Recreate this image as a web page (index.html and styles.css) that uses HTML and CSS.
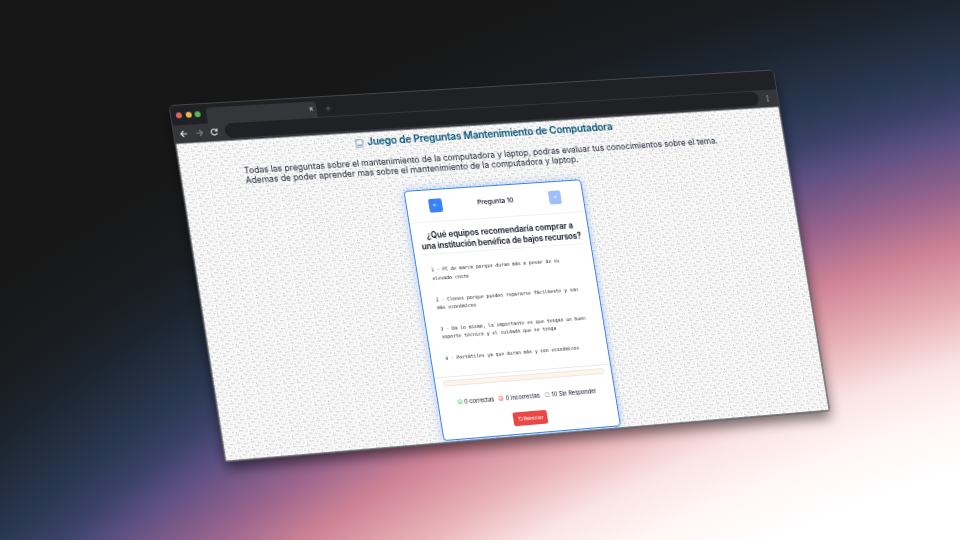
FILE: index.html
```html
<!DOCTYPE html>
<html lang="es">
<head>
<meta charset="utf-8">
<title>Juego de Preguntas</title>
<link rel="stylesheet" href="styles.css">
</head>
<body>
<div class="window">
  <div class="tabbar">
    <div class="lights"><i class="red"></i><i class="yellow"></i><i class="green"></i></div>
    <div class="tab"><svg viewBox="0 0 6 6" width="4.8" height="4.8"><path d="M1 1 5 5M5 1 1 5"/></svg></div>
    <svg class="plus" viewBox="0 0 6 6" width="6" height="6"><path d="M3 .4V5.6M.4 3H5.6"/></svg>
  </div>
  <div class="toolbar">
    <svg class="nav" viewBox="0 0 8 8" width="8" height="8"><path d="M7.4 4H1M4 1 1 4l3 3"/></svg>
    <svg class="nav dim" viewBox="0 0 8 8" width="8" height="8"><path d="M.6 4H7M4 1l3 3-3 3"/></svg>
    <svg class="nav" viewBox="0 0 8 8" width="8" height="8"><path d="M6.4 2.2A3 3 0 1 0 6.8 5M7 .6V3H4.6"/></svg>
    <div class="address"></div>
    <svg class="dots" viewBox="0 0 2 8" width="2" height="8"><circle cx="1" cy="1.6" r=".75"/><circle cx="1" cy="4" r=".75"/><circle cx="1" cy="6.4" r=".75"/></svg>
  </div>
  <main class="page">
    <svg class="pattern" width="640" height="322"><defs><pattern id="weave" width="14" height="8" patternUnits="userSpaceOnUse"><path class="d1" d="M1 .2v1.4M3 .2v1.4M8 1v1.4M10.2 1v1.4M5 4.2v1.4M7 4.2v1.4M12 5v1.4M1.4 5.6v1.4"/><path class="d2" d="M5.2 .4v1.2M12.6 .8v1.2M2 2.8v1.2M4.4 2.6v1.2M9 3.2v1.2M11.4 3.2v1.2M9.2 5.4v1.2M13.6 3v1.2M3.2 6.6v1.2M6 6.8v1.2M8.2 7v1M11 7v1"/></pattern></defs><rect width="640" height="322" fill="url(#weave)"/></svg>
    <h1 class="title"><svg viewBox="0 0 9 9" width="9" height="9"><rect x="1" y=".8" width="7" height="5.6" rx=".5"/><path d="M.4 8.2h8.2"/></svg><span>Juego de Preguntas Mantenimiento de Computadora</span></h1>
    <p class="intro"><span>Todas las preguntas sobre el mantenimiento de la computadora y laptop, podras evaluar tus conocimientos sobre el tema.</span><br><span>Ademas de poder aprender mas sobre el mantenimiento de la computadora y laptop.</span></p>
    <section class="card">
      <header class="head">
        <button class="step"><svg viewBox="0 0 6 6" width="5" height="5"><path d="M5 3H1M2.6 1.4 1 3l1.6 1.6"/></svg></button>
        <b>Pregunta 10</b>
        <button class="step off"><svg viewBox="0 0 6 6" width="5" height="5"><path d="M1 3h4M3.4 1.4 5 3 3.4 4.6"/></svg></button>
      </header>
      <h2 class="question"><span class="q1">¿Qué equipos recomendaría comprar a</span><br><span class="q2">una institución benéfica de bajos recursos?</span></h2>
      <div class="options">
        <div>1 - PC de marca porque duran más a pesar de su<br>elevado costo</div>
        <div>2 - Clones porque pueden repararse fácilmente y son<br>más económicos</div>
        <div>3 - Da lo mismo, lo importante es que tengan un buen<br>soporte técnico y el cuidado que se tenga</div>
        <div>4 - Portátiles ya que duran más y son económicos</div>
      </div>
      <footer class="foot">
        <div class="progress"></div>
        <div class="stats">
          <span><svg class="ok" viewBox="0 0 6 6" width="5.4" height="5.4"><path d="M5.3 2.5A2.4 2.4 0 1 1 4.2 1M2 2.8l1 1L5.4 1.2"/></svg>0 correctas</span>
          <span><svg class="bad" viewBox="0 0 6 6" width="5.4" height="5.4"><circle cx="3" cy="3" r="2.4"/><path d="m2.1 2.1 1.8 1.8M3.9 2.1 2.1 3.9"/></svg>0 incorrectas</span>
          <span><svg class="none" viewBox="0 0 6 6" width="5.4" height="5.4"><circle cx="3" cy="3" r="2.4"/></svg>10 Sin Responder</span>
        </div>
        <button class="reset"><svg viewBox="0 0 6 6" width="5" height="5"><path d="M1 1v1.6h1.6M1.2 2.4A2.2 2.2 0 1 1 1 4"/></svg>Reiniciar</button>
      </footer>
    </section>
  </main>
</div>
</body>
</html>
```
FILE: styles.css
```css
* { box-sizing: border-box; }
body {
  margin: 0; width: 960px; height: 540px; overflow: hidden; position: relative;
  font-family: Inter, "Liberation Sans", sans-serif;
  background: radial-gradient(2000px 1515px at 1500px 1500px, #fff 73%, #fff6f5 76.6%, #fbe5e5 79.7%, #e9b3b8 83.2%, #cf8496 87%, #9a648e 90.3%, #5d5083 93.9%, #3a4268 96%, #2a3751 98.2%, #1c252f 102.5%, #191c20 105.5%, #171717 110%);
}
svg { fill: none; stroke: currentColor; flex: none; }
button { border: 0; padding: 0; font: inherit; color: #fff; display: flex; align-items: center; justify-content: center; }
.window {
  width: 640px; height: 360px; overflow: hidden; border-radius: 4px 4px 2px 2px;
  transform-origin: 0 0;
  transform: matrix3d(0.99712, -0.05053, 0, 0.000070055, 0.152411, 0.981061, 0, -0.00001395, 0, 0, 1, 0, 169.5, 106, 0, 1);
  background: #202124;
  box-shadow: 0 0 0 .7px rgba(95,95,98,.85), 0 7px 14px rgba(0,0,0,.55);
}
.tabbar { height: 19.6px; display: flex; align-items: flex-end; background: #202124; }
.lights { width: 36.4px; height: 20px; display: flex; align-items: center; gap: 3.4px; padding-left: 5px; }
.lights i { width: 6.2px; height: 6.2px; border-radius: 50%; }
.red { background: #e1655c; }
.yellow { background: #eab84e; }
.green { background: #55bb52; }
.tab { width: 113px; height: 16px; background: #35363a; border-radius: 4px 4px 0 0; display: flex; align-items: center; justify-content: flex-end; padding-right: 4px; color: #e4e4e4; }
.plus { color: #66676b; stroke-width: .8; margin: 0 0 5px 9px; }
.toolbar { height: 18.2px; background: #35363a; display: flex; align-items: center; padding: 0 10.4px 0 6px; color: #e4e4e4; }
.nav { margin-right: 7.6px; stroke-width: 1.1; }
.dim { color: #7d7e82; }
.address { flex: 1; height: 14.4px; border-radius: 8px; background: #202124; margin: 0 9px 0 -.6px; }
.dots { fill: #c8c8c8; stroke: none; }
.page { height: 323px; background: #fefefe; position: relative; color: #172033; }
.pattern { position: absolute; left: 0; top: 0; }
.d1 { stroke: #a8a8a8; stroke-width: .9; }
.d2 { stroke: #dadada; stroke-width: .9; }
.title { position: relative; margin: 0; padding: 4.4px 0 0 183px; height: 27px; display: flex; align-items: flex-start; gap: 3.6px; color: #08557a; font-size: 10.7px; letter-spacing: -.26px; line-height: 14px; font-weight: 600; white-space: nowrap; }
.title svg { margin-top: 3px; stroke-width: .7; color: #47809d; }
.intro { position: relative; margin: 0 0 0 65px; font-size: 8.72px; line-height: 10.6px; white-space: nowrap; height: 36px; }
.card { position: relative; margin-left: 225px; width: 188.4px; height: 257.4px; background: #fff; border: .8px solid #3b82e8; border-radius: 4px; box-shadow: 0 0 8px rgba(59,130,246,.4); color: #0b1020; }
.head { height: 33px; border-bottom: .6px solid #eef0f3; padding: 0 23px; display: flex; align-items: center; justify-content: space-between; font-size: 6.8px; }
.head b { font-weight: 500; }
.step { width: 13.6px; height: 13.6px; border-radius: 2px; background: #3b82f6; }
.step svg { stroke-width: .7; }
.off { background: #9dc0fa; }
.question { margin: 0 7px; height: 33px; padding-top: 8px; border-bottom: .6px solid #f0f1f4; text-align: center; font-size: 8.4px; line-height: 11px; font-weight: 600; white-space: nowrap; }
.q1 { letter-spacing: -.05px; }
.q2 { letter-spacing: -.17px; }
.options { padding: 11.6px 0 0 14.4px; height: 125.4px; display: flex; flex-direction: column; gap: 13px; font: 4.93px/8.6px "DejaVu Sans Mono", "Liberation Mono", monospace; white-space: nowrap; color: #161b25; }
.foot { border-top: .6px solid #e8eaee; padding-top: 3px; display: flex; flex-direction: column; align-items: center; }
.progress { width: 171px; height: 5.6px; border-radius: 3px; background: #fdf5eb; border: .5px solid #eee6de; }
.stats { margin-top: 11.8px; height: 10px; display: flex; align-items: center; gap: 5px; font-size: 5.8px; white-space: nowrap; }
.stats span { display: flex; align-items: center; gap: 2px; }
.stats svg { stroke-width: .6; }
.ok { color: #22c55e; }
.bad { color: #ef4444; }
.none { color: #8b929d; }
.reset { margin-top: 10.2px; width: 36px; height: 13.8px; border-radius: 2px; background: #ea4646; font-size: 5.2px; gap: 1px; }
.reset svg { stroke-width: .6; }
```
